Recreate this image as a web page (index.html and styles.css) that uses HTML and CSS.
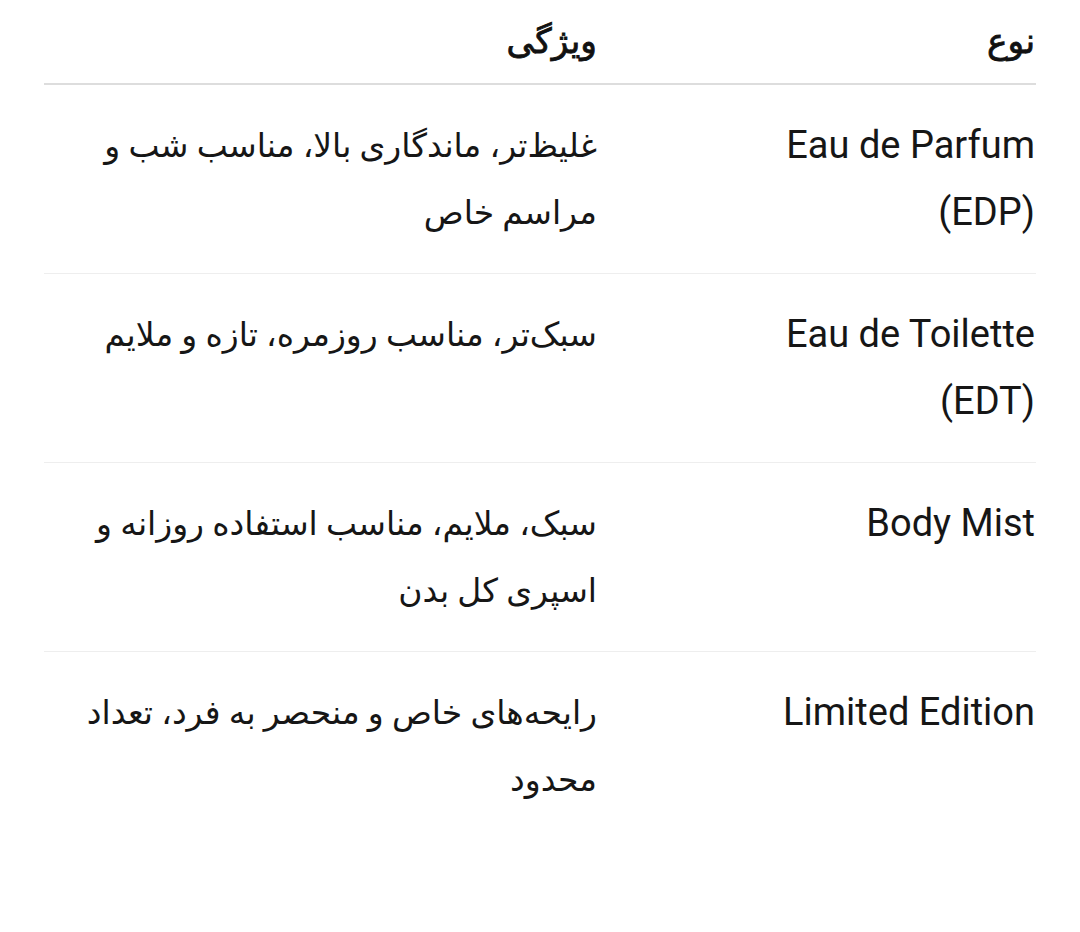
FILE: index.html
```html
<!DOCTYPE html>
<html lang="fa" dir="rtl">
<head>
<meta charset="utf-8">
<link rel="stylesheet" href="styles.css">
</head>
<body>
<div class="table">
  <div class="row head">
    <div class="cell type">نوع</div>
    <div class="cell feat">ویژگی</div>
  </div>
  <div class="row">
    <div class="cell type">Eau de Parfum (EDP)</div>
    <div class="cell feat">غلیظ‌تر، ماندگاری بالا، مناسب شب و مراسم خاص</div>
  </div>
  <div class="row">
    <div class="cell type">Eau de Toilette (EDT)</div>
    <div class="cell feat">سبک‌تر، مناسب روزمره، تازه و ملایم</div>
  </div>
  <div class="row">
    <div class="cell type">Body Mist</div>
    <div class="cell feat">سبک، ملایم، مناسب استفاده روزانه و اسپری کل بدن</div>
  </div>
  <div class="row last">
    <div class="cell type">Limited Edition</div>
    <div class="cell feat">رایحه‌های خاص و منحصر به فرد، تعداد محدود</div>
  </div>
</div>
</body>
</html>
```

FILE: styles.css
```css
html, body {
  margin: 0;
  padding: 0;
  background: #ffffff;
}
body {
  font-family: Roboto, "DejaVu Sans", sans-serif;
  color: #161616;
  font-size: 38px;
  line-height: 67px;
}
.table {
  width: 992px;
  margin-left: 44px;
  margin-right: 44px;
  direction: rtl;
}
.row {
  display: grid;
  grid-template-columns: 439px 553px;
  padding: 27px 0;
  border-bottom: 1px solid #eeeeee;
}
.row.head {
  padding: 8px 0 8px;
  border-bottom: 2px solid #dddddd;
  color: #111111;
}
.row.head .cell {
  font-size: 34.5px;
  -webkit-text-stroke: 0.8px #111111;
}
.row.last {
  border-bottom: none;
}
.cell {
  text-align: right;
}
.cell.type {
  padding-right: 1px;
  padding-left: 100px;
}
.cell.feat {
  padding: 0;
  font-size: 33px;
}
```
